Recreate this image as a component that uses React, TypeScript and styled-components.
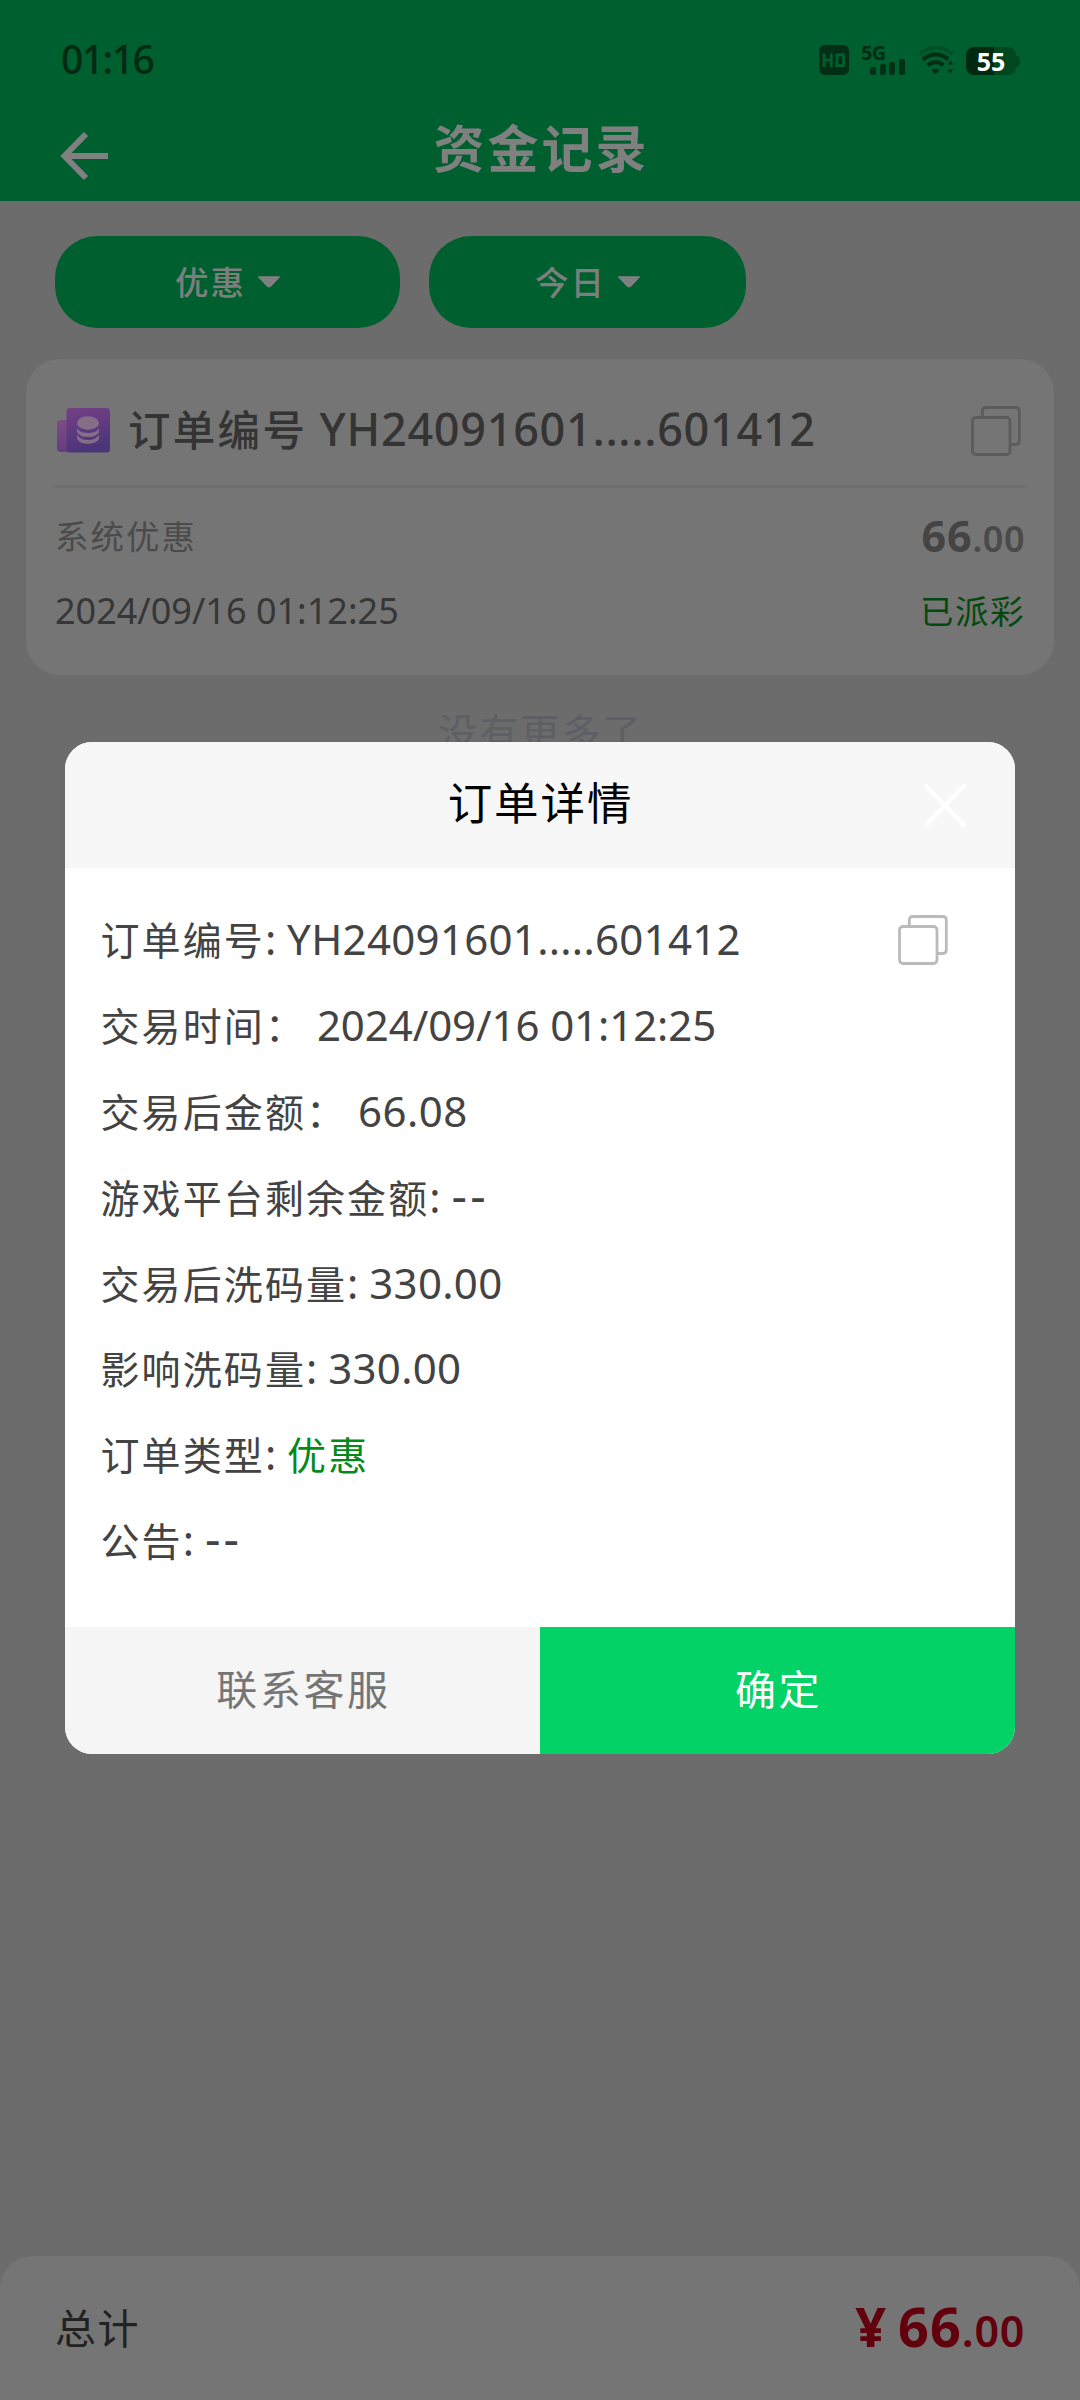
import React from "react";
import styled, { createGlobalStyle } from "styled-components";

const GlobalStyle = createGlobalStyle`
  *, *::before, *::after { box-sizing: border-box; }
  body { margin: 0; background: #6c6c6c; }
  button { border: 0; padding: 0; background: none; font: inherit; color: inherit; }
`;

const Screen = styled.div`
  position: relative;
  display: flex;
  flex-direction: column;
  width: 1080px;
  height: 2400px;
  overflow: hidden;
  background: #6c6c6c;
  font-family: "Noto Sans", "Noto Sans CJK SC", sans-serif;
  white-space: pre;
`;

/* Runs of Latin or Chinese text that share one baseline inside a line. */
const Run = styled.span<{ $size: number; $track?: number; $weight?: number; $color?: string; $gap?: number }>`
  font-size: ${(p) => p.$size}px;
  letter-spacing: ${(p) => p.$track ?? 0}px;
  font-weight: ${(p) => p.$weight ?? 400};
  line-height: 0;
  margin-left: ${(p) => p.$gap ?? 0}px;
  ${(p) => p.$color && `color: ${p.$color};`}
`;

const Header = styled.header`
  height: 201px;
  flex: none;
  background: #005f2e;
`;

const StatusBar = styled.div`
  display: flex;
  justify-content: space-between;
  height: 104px;
  padding: 32px 60px 0 61px;
`;

const Clock = styled.div`
  height: 56px;
  line-height: 54px;
  font-size: 39px;
  font-weight: 500;
  letter-spacing: -1.5px;
  color: #002a12;
`;

const StatusIcons = styled.div`
  display: flex;
  align-items: flex-end;
  height: 43px;
`;

const HdBadge = styled.div`
  width: 30px;
  height: 30px;
  margin-right: 12px;
  border-radius: 6px;
  background: #002f15;
`;

const Signal = styled.div`
  display: flex;
  flex-direction: column;
  width: 45px;
  height: 31px;
  margin-right: 12px;
`;

const NetworkLabel = styled.div`
  height: 15px;
  line-height: 17px;
  font-size: 20px;
  font-weight: 700;
  letter-spacing: -0.8px;
  color: #002c13;
`;

const Bars = styled.div`
  display: flex;
  align-items: flex-end;
  gap: 3.5px;
  height: 16px;
  padding-left: 9px;
`;

const Bar = styled.div<{ $h: number }>`
  width: 6px;
  height: ${(p) => p.$h}px;
  border-radius: 2px;
  background: #003016;
`;

const Battery = styled.div`
  display: flex;
  align-items: center;
  margin-left: 12px;
`;

const Cell = styled.div`
  width: 50px;
  height: 28px;
  border-radius: 8px;
  background: linear-gradient(90deg, #00290f 56%, #004720 56%);
  color: #fff;
  font-size: 25px;
  font-weight: 700;
  line-height: 29px;
  text-align: center;
`;

const Nub = styled.div`
  width: 4px;
  height: 11px;
  border-radius: 0 4px 4px 0;
  background: #004720;
`;

const NavBar = styled.div`
  display: grid;
  grid-template-columns: 120px 1fr 120px;
  height: 97px;
  padding: 0 60px;
`;

const BackButton = styled.button`
  display: flex;
  padding-top: 27px;
`;

const NavTitle = styled.h1`
  margin: 0;
  height: 90px;
  padding-left: 3px;
  line-height: 89px;
  text-align: center;
  color: #808080;
  font-size: 51px;
`;

const Filters = styled.div`
  display: flex;
  gap: 29px;
  padding: 35px 55px 31px;
`;

const Pill = styled.button<{ $w: number }>`
  display: flex;
  align-items: center;
  justify-content: center;
  gap: 11px;
  width: ${(p) => p.$w}px;
  height: 92px;
  padding-left: 1px;
  border-radius: 42px;
  background: #005f2e;
  color: #7c7f7d;
`;

const PillText = styled.span`
  line-height: 88px;
  font-size: 34px;
`;

const Card = styled.section`
  margin: 0 26px;
  height: 316px;
  padding: 0 29px;
  border-radius: 34px;
  background: #757575;
`;

const CardHead = styled.div`
  display: flex;
  align-items: center;
  height: 129px;
  padding: 17px 4px 0 2px;
  border-bottom: 3px solid #6d6d6d;
`;

const OrderTitle = styled.div`
  flex: 1;
  height: 80px;
  line-height: 75px;
  margin-left: 17px;
  font-size: 45px;
  color: #343434;
`;

const CardLine = styled.div<{ $top: number }>`
  display: flex;
  justify-content: space-between;
  height: 73px;
  margin-top: ${(p) => p.$top}px;
  line-height: 73px;
  font-size: 36px;
`;

const Amount = styled.span`
  padding-top: 3px;
`;

const Finish = styled.div`
  margin-top: 22px;
  height: 70px;
  padding-left: 2px;
  line-height: 70px;
  text-align: center;
  font-size: 39px;
  color: #5e5e66;
`;

const TotalBar = styled.footer`
  display: flex;
  justify-content: space-between;
  height: 144px;
  margin-top: auto;
  padding: 0 55px;
  border-radius: 33px 33px 0 0;
  background: #757575;
  line-height: 144px;
  font-size: 42px;
`;

const Mask = styled.div`
  position: absolute;
  inset: 0;
  padding: 742px 65px 0;
`;

const Dialog = styled.div`
  width: 950px;
  height: 1012px;
  display: flex;
  flex-direction: column;
  overflow: hidden;
  border-radius: 27px;
  background: #fff;
`;

const DialogHead = styled.div`
  display: grid;
  grid-template-columns: 100px 1fr 100px;
  align-items: center;
  height: 126px;
  background: #f7f7f7;
`;

const DialogTitle = styled.h2`
  grid-column: 2;
  margin: 0;
  height: 126px;
  padding-left: 1px;
  line-height: 121px;
  text-align: center;
  font-size: 45px;
  font-weight: 400;
  color: #000;
`;

const CloseButton = styled.button`
  display: flex;
  padding-left: 8px;
`;

const Details = styled.div`
  flex: 1;
  padding: 28px 67px 0 35.5px;
  color: #434343;
`;

const DetailRow = styled.div`
  display: flex;
  align-items: center;
  justify-content: space-between;
  height: 85.9px;
`;

const DetailText = styled.div`
  line-height: 86px;
  font-size: 42px;
`;

const CopyButton = styled.button`
  display: flex;
  padding-top: 3px;
`;

const Actions = styled.div`
  display: grid;
  grid-template-columns: 1fr 1fr;
  height: 127px;
`;

const Action = styled.button<{ $primary?: boolean }>`
  background: ${(p) => (p.$primary ? "#03d267" : "#f5f5f5")};
  color: ${(p) => (p.$primary ? "#fff" : "#757575")};
  font-size: 41px;
  line-height: 118px;
  padding: 0 0 4px 2px;
`;

const Caret = () => (
  <svg width="24" height="12" viewBox="0 0 24 12">
    <path d="M1.3 0.8h21.4L14 10.2q-2 1.6-4 0z" fill="#808080" stroke="#808080" strokeLinejoin="round" />
  </svg>
);

const CopyIcon = ({ color }: { color: string }) => (
  <svg width="50" height="50" viewBox="0 0 50 50" fill="none" stroke={color} strokeWidth="2.8">
    <rect x="1.5" y="11.5" width="37.5" height="37" rx="3.5" />
    <path d="M11.3 11.5V5q0-3.5 3.5-3.5h30q3.5 0 3.5 3.5v30q0 3.5-3.5 3.5H39" />
  </svg>
);

const LedgerIcon = () => (
  <svg width="54" height="45" viewBox="0 0 54 45">
    <defs>
      <linearGradient id="front" x1="0" y1="0" x2="0.2" y2="1">
        <stop offset="0" stopColor="#753f86" />
        <stop offset="1" stopColor="#4a3579" />
      </linearGradient>
      <linearGradient id="back" x1="0" y1="0" x2="0" y2="1">
        <stop offset="0" stopColor="#7c4d83" />
        <stop offset="1" stopColor="#673b81" />
      </linearGradient>
    </defs>
    <path d="M4 12h8v32H4q-4 0-4-4V16q0-4 4-4z" fill="url(#back)" />
    <rect x="9.5" y="0" width="43.5" height="44.5" rx="3.5" fill="url(#front)" />
    <g fill="#856f87">
      <ellipse cx="31" cy="15" rx="11" ry="6.7" />
      <path d="M20 20.5q3.5 4.5 11 4.5t11-4.5q1 3.5-2 6t-9 2.5-9-2.5-2-6z" />
      <path d="M20 27q3.5 5 11 5t11-5q1 4-2 6.3t-9 2.5-9-2.5-2-6.3z" />
    </g>
  </svg>
);

const HdGlyph = () => (
  <svg width="30" height="30" viewBox="0 0 30 30" fill="none" stroke="#005f2e" strokeWidth="2.8">
    <path d="M5 8.5v13.500M12.300 8.500v13.500M5 15.200h7M18 9.900h6.500v10.700h-6.500z" />
  </svg>
);

const WifiIcon = () => (
  <svg width="36" height="30" viewBox="0 0 36 30" fill="none">
    <path d="M1.5 9.5Q17.5-4.5 34.5 9" stroke="#005026" strokeWidth="3.6" />
    <path d="M5 14.5Q17.5 4.5 30 14" stroke="#002f15" strokeWidth="4.2" />
    <path d="M9.5 20.5Q17.5 14 25.5 20" stroke="#002f15" strokeWidth="4" />
    <path d="M13.5 25q4-2.6 8 0l-4 4.5z" fill="#002f15" />
    <path d="M29.5 19.5l2.8-4 2.8 4zM29.5 24.5l2.8 4 2.8-4z" fill="#002f15" />
  </svg>
);

const CloseIcon = () => (
  <svg width="44" height="45" viewBox="0 0 44 45" stroke="#fff" strokeWidth="4" strokeLinecap="round">
    <path d="M3 3l38 39M41 3L3 42" />
  </svg>
);

const BackIcon = () => (
  <svg width="50" height="50" viewBox="0 0 50 50" fill="none" stroke="#808080" strokeWidth="6">
    <path d="M26 3L4.5 25 26 47M4 25h44" />
  </svg>
);

type Detail = { label: string; sep: "half" | "full"; value: string; track?: number; size?: number; green?: boolean; copy?: boolean };

const details: Detail[] = [
  { label: "订单编号", sep: "half", value: "YH24091601.....601412", track: 0.3, copy: true },
  { label: "交易时间", sep: "full", value: "2024/09/16 01:12:25", track: -0.1 },
  { label: "交易后金额", sep: "full", value: "66.08", track: 0.5 },
  { label: "游戏平台剩余金额", sep: "half", value: "--", track: 3.2, size: 48 },
  { label: "交易后洗码量", sep: "half", value: "330.00", track: 0.3 },
  { label: "影响洗码量", sep: "half", value: "330.00", track: 0.3 },
  { label: "订单类型", sep: "half", value: "优惠", green: true },
  { label: "公告", sep: "half", value: "--", track: 3.2, size: 48 },
];

export default function App() {
  return (
    <Screen>
      <GlobalStyle />
      <Header>
        <StatusBar>
          <Clock>01:16</Clock>
          <StatusIcons>
            <HdBadge><HdGlyph /></HdBadge>
            <Signal>
              <NetworkLabel>5G</NetworkLabel>
              <Bars>
                {[8.5, 11, 13.5, 16].map((h) => <Bar key={h} $h={h} />)}
              </Bars>
            </Signal>
            <WifiIcon />
            <Battery>
              <Cell>55</Cell>
              <Nub />
            </Battery>
          </StatusIcons>
        </StatusBar>
        <NavBar>
          <BackButton><BackIcon /></BackButton>
          <NavTitle><Run $size={51} $track={3} $weight={700}>资金记录</Run></NavTitle>
        </NavBar>
      </Header>

      <Filters>
        <Pill $w={345}><PillText><Run $size={33.5} $track={2} $weight={500}>优惠</Run></PillText><Caret /></Pill>
        <Pill $w={317}><PillText><Run $size={33.5} $track={2} $weight={500}>今日</Run></PillText><Caret /></Pill>
      </Filters>

      <Card>
        <CardHead>
          <LedgerIcon />
          <OrderTitle>
            <Run $size={42.5} $track={2.3} $weight={500}>订单编号</Run>
            <Run $size={45} $track={0.7} $weight={500}> YH24091601.....601412</Run>
          </OrderTitle>
          <CopyIcon color="#5c5c5c" />
        </CardHead>
        <CardLine $top={11}>
          <span><Run $size={33.5} $track={2} $color="#4b4b4b">系统优惠</Run></span>
          <Amount>
            <Run $size={43} $weight={700} $track={0.8} $color="#444">66</Run>
            <Run $size={36} $weight={600} $track={0.5} $color="#4a4a4a">.00</Run>
          </Amount>
        </CardLine>
        <CardLine $top={2}>
          <span><Run $size={36} $color="#363636">2024/09/16 01:12:25</Run></span>
          <span><Run $size={33.5} $track={1.5} $color="#044a10">已派彩</Run></span>
        </CardLine>
      </Card>
      <Finish><Run $size={39} $track={2}>没有更多了</Run></Finish>

      <TotalBar>
        <span><Run $size={41} $track={1.5} $color="#222">总计</Run></span>
        <Amount>
          <Run $size={54} $weight={700} $color="#62000d">¥</Run>
          <Run $size={54} $weight={700} $track={1} $color="#62000d" $gap={12}>66</Run>
          <Run $size={43} $weight={600} $track={0.7} $color="#62000d">.00</Run>
        </Amount>
      </TotalBar>

      <Mask>
        <Dialog>
          <DialogHead>
            <DialogTitle><Run $size={44.5} $track={1.9}>订单详情</Run></DialogTitle>
            <CloseButton><CloseIcon /></CloseButton>
          </DialogHead>
          <Details>
            {details.map((d) => (
              <DetailRow key={d.label}>
                <DetailText>
                  <Run $size={39} $track={2.1}>{d.label}{d.sep === "full" ? "：" : ""}</Run>
                  <Run $size={42}>{d.sep === "half" ? ": " : " "}</Run>
                  {d.green
                    ? <Run $size={39} $track={2.1} $color="#048a1a">{d.value}</Run>
                    : <Run $size={d.size ?? 42} $track={d.track}>{d.value}</Run>}
                </DetailText>
                {d.copy && <CopyButton><CopyIcon color="#bbb" /></CopyButton>}
              </DetailRow>
            ))}
          </Details>
          <Actions>
            <Action><Run $size={41} $track={2.6}>联系客服</Run></Action>
            <Action $primary><Run $size={41} $track={2.6}>确定</Run></Action>
          </Actions>
        </Dialog>
      </Mask>
    </Screen>
  );
}
